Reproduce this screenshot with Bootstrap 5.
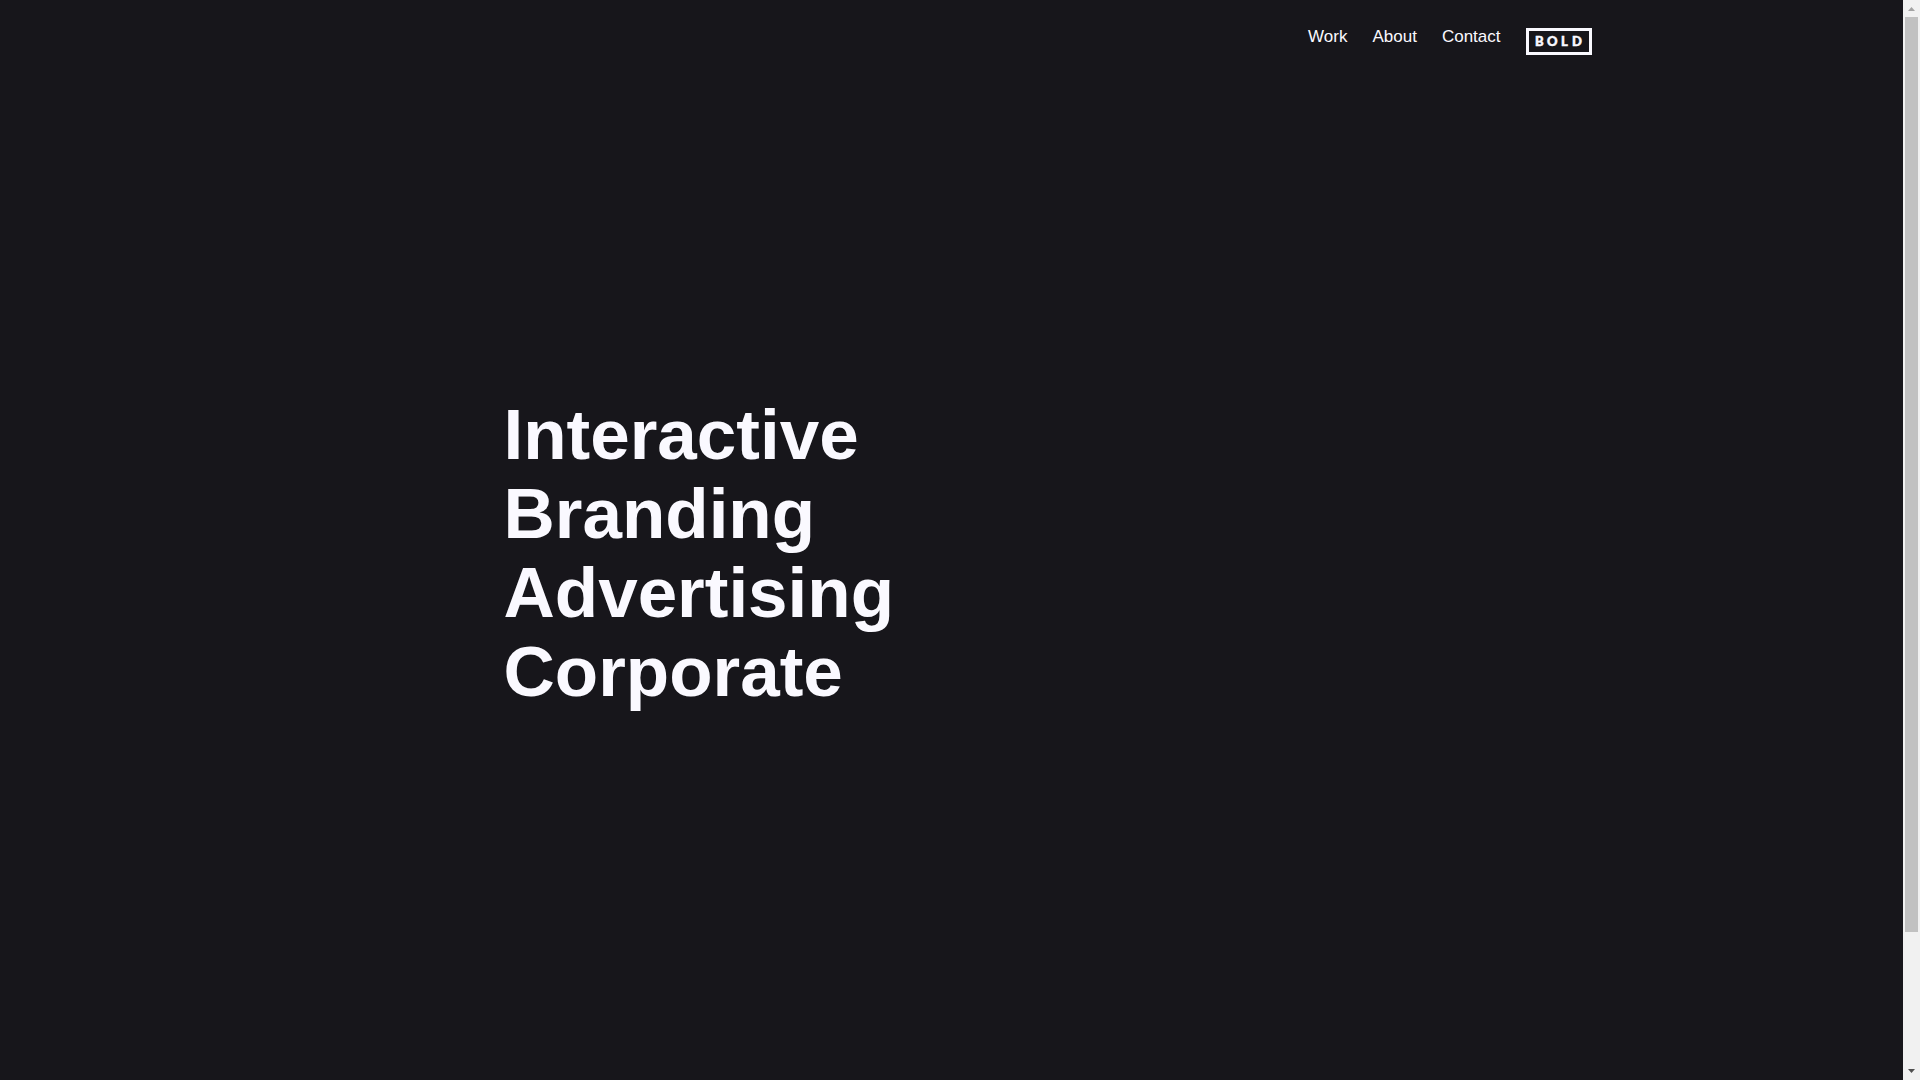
<!DOCTYPE html>
<html lang="en">
<head>
<meta charset="utf-8">
<meta name="viewport" content="width=device-width, initial-scale=1">
<title>Bold</title>
<link href="https://cdn.jsdelivr.net/npm/bootstrap@5.3.0/dist/css/bootstrap.min.css" rel="stylesheet">
<style>
body { background: #17161b; color: #faf9ff; font-family: "Liberation Sans", Arial, sans-serif; }
.page-shell { max-width: 1280px; }
.top-nav { gap: 25px; padding-top: 28px; }
.top-nav a { color: #faf9ff; font-size: 17px; line-height: 17px; }
.top-nav svg { display: block; width: 66px; height: 27px; }
.logo-text { font-family: Lato, sans-serif; font-size: 13px; font-weight: 900; stroke: #faf9ff; stroke-width: .5px; }
.topics { padding-left: 192px; padding-bottom: 30px; }
.topics a { color: #faf9ff; font-size: 71px; line-height: 79px; font-weight: 700; }
.scroll-track { width: 17px; background: #f1f1f1; }
.scroll-track svg { display: block; width: 17px; height: 17px; }
.scroll-thumb { flex: 915 0 0; margin: 0 2px; background: #c1c1c1; }
.scroll-rest { flex: 131 0 0; }
</style>
<script src="https://cdn.jsdelivr.net/npm/bootstrap@5.3.0/dist/js/bootstrap.bundle.min.js"></script>
</head>
<body class="d-flex vh-100 overflow-hidden">
<div class="flex-grow-1">
  <div class="page-shell mx-auto h-100 d-flex flex-column">
    <header>
      <nav class="top-nav d-flex justify-content-end" aria-label="Main">
        <a class="text-decoration-none" href="#work">Work</a>
        <a class="text-decoration-none" href="#about">About</a>
        <a class="text-decoration-none" href="#contact">Contact</a>
        <a href="#home" aria-label="Bold home">
          <svg viewBox="0 0 66 27">
            <rect x="1.5" y="1.5" width="63" height="24" fill="none" stroke="#faf9ff" stroke-width="3"/>
            <text class="logo-text" x="9 21 35 46" y="18" fill="#faf9ff">BOLD</text>
          </svg>
        </a>
      </nav>
    </header>
    <main class="topics flex-grow-1 d-flex flex-column justify-content-center align-items-start">
      <a class="text-decoration-none" href="#interactive">Interactive</a>
      <a class="text-decoration-none" href="#branding">Branding</a>
      <a class="text-decoration-none" href="#advertising">Advertising</a>
      <a class="text-decoration-none" href="#corporate">Corporate</a>
    </main>
  </div>
</div>
<div class="scroll-track d-flex flex-column flex-shrink-0" aria-hidden="true">
  <svg viewBox="0 0 17 17"><path d="M5 11l3.5-4L12 11z" fill="#a3a3a3"/></svg>
  <div class="scroll-thumb"></div>
  <div class="scroll-rest"></div>
  <svg viewBox="0 0 17 17"><path d="M5 6l3.5 4L12 6z" fill="#505050"/></svg>
</div>
</body>
</html>
